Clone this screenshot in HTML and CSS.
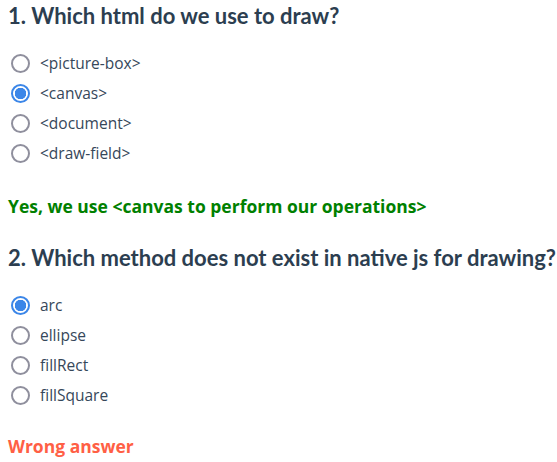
FILE: index.html
```html
<!DOCTYPE html>
<html>
<head>
<meta charset="utf-8">
<link rel="stylesheet" href="styles.css">
</head>
<body>
<div class="quiz">
  <section class="question">
    <h3 class="title">1. Which html do we use to draw?</h3>
    <div class="options">
      <label class="option"><span class="radio"></span><span class="label">&lt;picture-box&gt;</span></label>
      <label class="option"><span class="radio checked"></span><span class="label">&lt;canvas&gt;</span></label>
      <label class="option"><span class="radio"></span><span class="label">&lt;document&gt;</span></label>
      <label class="option"><span class="radio"></span><span class="label">&lt;draw-field&gt;</span></label>
    </div>
    <p class="result correct">Yes, we use &lt;canvas to perform our operations&gt;</p>
  </section>
  <section class="question">
    <h3 class="title">2. Which method does not exist in native js for drawing?</h3>
    <div class="options">
      <label class="option"><span class="radio checked"></span><span class="label">arc</span></label>
      <label class="option"><span class="radio"></span><span class="label">ellipse</span></label>
      <label class="option"><span class="radio"></span><span class="label">fillRect</span></label>
      <label class="option"><span class="radio"></span><span class="label">fillSquare</span></label>
    </div>
    <p class="result wrong">Wrong answer</p>
  </section>
</div>
</body>
</html>
```
FILE: styles.css
```css
html, body {
  margin: 0;
  padding: 0;
  background: #ffffff;
}
body {
  font-family: "Open Sans", "Noto Sans", sans-serif;
  color: #2c3e50;
}
.quiz {
  padding: 2px 8px 0 8px;
  display: flex;
  flex-direction: column;
}
.question {
  display: flex;
  flex-direction: column;
}
.title {
  margin: 0;
  font-family: "Lato", "Open Sans", sans-serif;
  font-size: 22px;
  line-height: 28px;
  font-weight: 700;
  color: #2c3e50;
  white-space: nowrap;
}
.options {
  display: flex;
  flex-direction: column;
  margin-top: 18px;
}
.option {
  display: flex;
  align-items: center;
  height: 30px;
  gap: 10px;
  padding-left: 3px;
}
.radio {
  width: 19px;
  height: 19px;
  box-sizing: border-box;
  border: 2px solid #8f8f9d;
  border-radius: 50%;
  flex: none;
}
.radio.checked {
  border-color: #3b86e8;
  background: radial-gradient(circle, #3b86e8 0 5.5px, #ffffff 6px);
}
.label {
  font-size: 15.5px;
  color: #36475a;
}
.result {
  margin: 26px 0 0 0;
  font-size: 17.5px;
  line-height: 24px;
  font-weight: 700;
}
.correct {
  color: #008000;
  margin-bottom: 26px;
}
.wrong {
  margin-top: 24px;
  color: #ff5f45;
}
```
